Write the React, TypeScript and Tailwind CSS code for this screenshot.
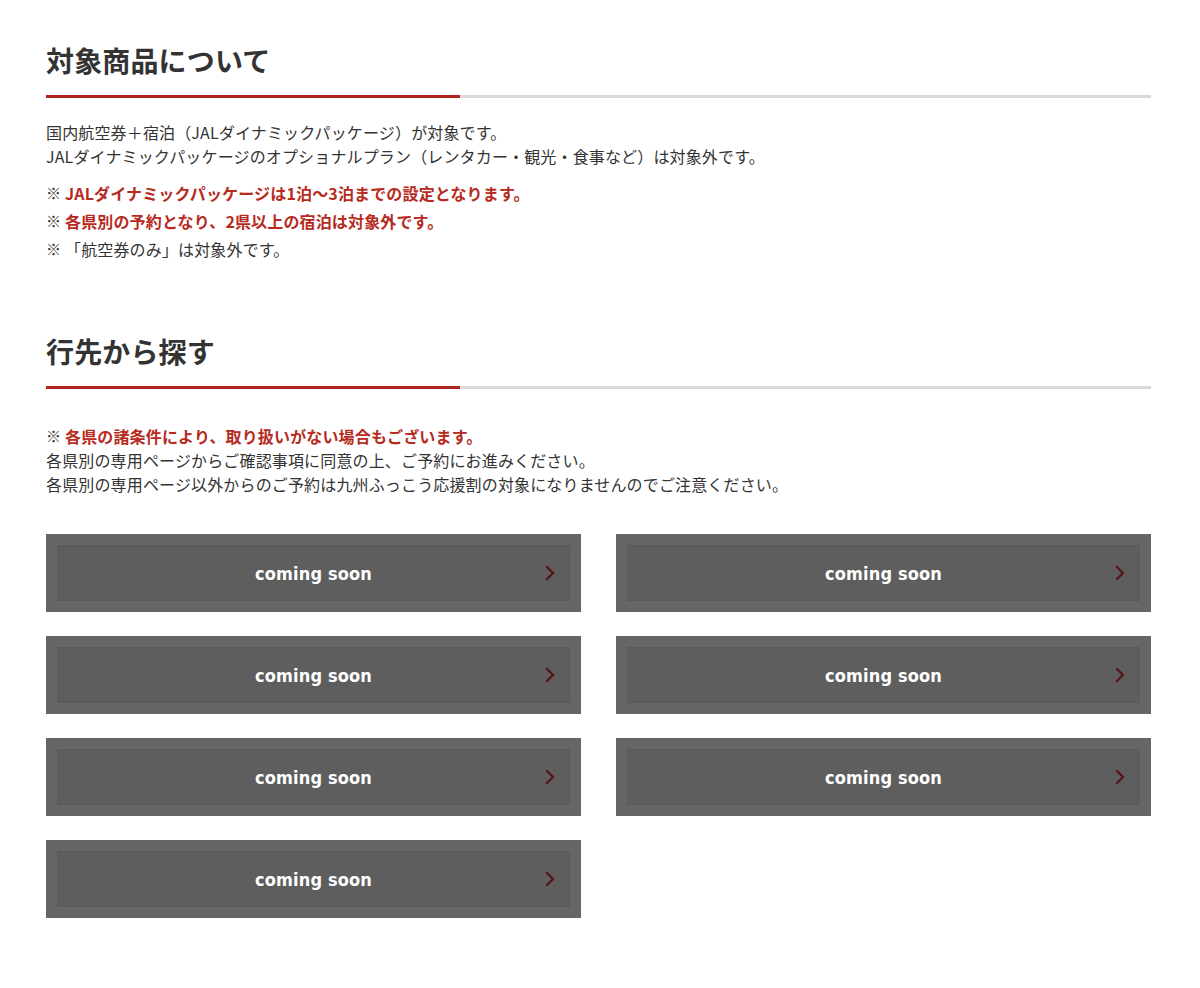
const jp = { fontFamily: '"Noto Sans CJK JP", "Noto Sans", sans-serif' };

function SectionTitle({ children, className = "" }: { children: React.ReactNode; className?: string }) {
  return (
    <div className={className}>
      <h2 className="text-[28px] leading-[42px] font-bold text-[#333333]">{children}</h2>
      {/* 見出し下の二色ライン */}
      <div className="mt-[14px] flex h-[3px]">
        <div className="w-[414px] bg-[#b0241c]" />
        <div className="flex-1 bg-[#d9d9d9]" />
      </div>
    </div>
  );
}

function Note({ children, red = false }: { children: React.ReactNode; red?: boolean }) {
  return (
    <li className="flex leading-[28px]">
      <span className="w-[19px] shrink-0 text-[15px] text-[#333333]">※</span>
      <span className={red ? "font-bold text-[#b72a1e]" : "text-[#333333]"}>{children}</span>
    </li>
  );
}

function ComingSoon() {
  return (
    <div className="bg-[#666666] p-[11px]">
      <div className="relative flex h-[56px] items-center justify-center border border-[#5a5a5a] bg-[#5e5e5e]">
        <span
          className="text-[18px] font-bold text-white"
          style={{ fontFamily: '"DejaVu Sans Condensed", "DejaVu Sans", Verdana, sans-serif', fontStretch: "condensed" }}
        >
          coming soon
        </span>
        <svg
          className="absolute right-[14px] top-1/2 -translate-y-1/2"
          width="10"
          height="16"
          viewBox="0 0 10 16"
          fill="none"
        >
          <path d="M2 2l6 6-6 6" stroke="#561414" strokeWidth="2.2" strokeLinecap="square" />
        </svg>
      </div>
    </div>
  );
}

export default function App() {
  const areas = [0, 1, 2, 3, 4, 5, 6];

  return (
    <div className="min-h-[988px] bg-white" style={jp}>
      <div className="ml-[46px] w-[1105px] pt-[39px] pb-[69px] text-[16px] tracking-[0.15px] text-[#333333]">
        <SectionTitle>対象商品について</SectionTitle>

        <div className="mt-[22px] leading-[24px]">
          <p>国内航空券＋宿泊（JALダイナミックパッケージ）が対象です。</p>
          <p>JALダイナミックパッケージのオプショナルプラン（レンタカー・観光・食事など）は対象外です。</p>
        </div>

        <ul className="mt-[11px]">
          <Note red>JALダイナミックパッケージは1泊〜3泊までの設定となります。</Note>
          <Note red>各県別の予約となり、2県以上の宿泊は対象外です。</Note>
          <Note>「航空券のみ」は対象外です。</Note>
        </ul>

        <SectionTitle className="mt-[67px]">行先から探す</SectionTitle>

        <div className="mt-[35px] leading-[24px]">
          <p className="flex">
            <span className="w-[19px] shrink-0 text-[15px]">※</span>
            <span className="font-bold text-[#b72a1e]">各県の諸条件により、取り扱いがない場合もございます。</span>
          </p>
          <p>各県別の専用ページからご確認事項に同意の上、ご予約にお進みください。</p>
          <p>各県別の専用ページ以外からのご予約は九州ふっこう応援割の対象になりませんのでご注意ください。</p>
        </div>

        <div className="mt-[38px] grid grid-cols-2 gap-x-[35px] gap-y-[24px]">
          {areas.map((i) => (
            <ComingSoon key={i} />
          ))}
        </div>
      </div>
    </div>
  );
}
